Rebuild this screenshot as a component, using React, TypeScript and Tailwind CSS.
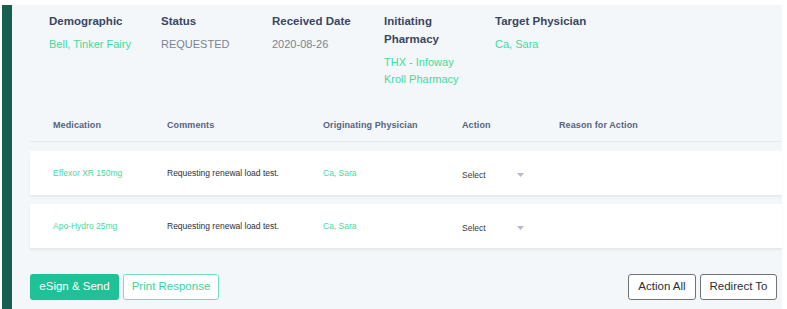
interface Field { label: string; values: string[]; tone: "green" | "gray"; }
interface Med { name: string; comment: string; physician: string; }

const FIELDS: Field[] = [
  { label: "Demographic", values: ["Bell, Tinker Fairy"], tone: "green" },
  { label: "Status", values: ["REQUESTED"], tone: "gray" },
  { label: "Received Date", values: ["2020-08-26"], tone: "gray" },
  { label: "Initiating Pharmacy", values: ["THX - Infoway", "Kroll Pharmacy"], tone: "green" },
  { label: "Target Physician", values: ["Ca, Sara"], tone: "green" },
];

const MEDS: Med[] = [
  { name: "Effexor XR 150mg", comment: "Requesting renewal load test.", physician: "Ca, Sara" },
  { name: "Apo-Hydro 25mg", comment: "Requesting renewal load test.", physician: "Ca, Sara" },
];

const COLS = "grid grid-cols-[114px_156px_139px_97px_1fr] pl-[23px]";

function Caret() {
  return (
    <svg width="7" height="4" viewBox="0 0 7 4" className="ml-[31px] mt-[-1px]">
      <path d="M0 0h7L3.5 4z" fill="#b4bac6" />
    </svg>
  );
}

export default function App() {
  return (
    <div className="flex h-[309px] w-full bg-white pl-[2px] pr-[5px] pt-[5px] font-['Liberation_Sans',Arial,sans-serif]">
      <div className="w-[10px] shrink-0 bg-[#17604f]" />
      <div className="flex flex-1 flex-col bg-[#f4f7fa]">
        {/* Summary */}
        <div className="grid grid-cols-[112px_111px_112px_111px_1fr] pl-[37px] pt-[7px]">
          {FIELDS.map(f => (
            <div key={f.label} className="pr-4">
              <div className="text-[11.5px] font-bold leading-[18px] text-[#39465f]">{f.label}</div>
              <div className="mt-[6px]">
                {f.values.map(v => (
                  <div
                    key={v}
                    className={`text-[11px] leading-[17px] ${f.tone === "green" ? "text-[#40dc9b]" : "text-[#7b8291]"}`}
                  >
                    {v}
                  </div>
                ))}
              </div>
            </div>
          ))}
        </div>

        {/* Medications */}
        <div className="ml-[18px] mt-[22px]">
          <div className={`${COLS} h-[32px] items-center border-b border-[#e6eaef] text-[9px] font-bold tracking-[0.1px] text-[#55637e]`}>
            <div>Medication</div>
            <div>Comments</div>
            <div>Originating Physician</div>
            <div>Action</div>
            <div>Reason for Action</div>
          </div>
          {MEDS.map(m => (
            <div
              key={m.name}
              className={`${COLS} mt-[9px] h-[44px] items-center bg-white text-[8.5px] shadow-[0_2px_2px_rgba(0,0,0,0.06)]`}
            >
              <div className="text-[#4ad9a0]">{m.name}</div>
              <div className="text-[#2b2f3a]">{m.comment}</div>
              <div className="text-[#4ad9a0]">{m.physician}</div>
              <div className="mt-[4px] flex items-center text-[#333a47]">
                Select
                <Caret />
              </div>
              <div />
            </div>
          ))}
        </div>

        {/* Footer actions */}
        <div className="ml-[18px] mr-[5px] mt-[26px] flex items-center gap-[4px] text-[11.5px]">
          <button className="h-[26px] w-[89px] rounded-[3px] bg-[#1fc297] text-white">eSign &amp; Send</button>
          <button className="h-[26px] w-[96px] rounded-[3px] border border-[#74dcc2] bg-white text-[#3fcf9f]">Print Response</button>
          <div className="flex-1" />
          <button className="h-[26px] w-[68px] rounded-[3px] border border-[#6f737a] bg-white text-[#2b2f36]">Action All</button>
          <button className="h-[26px] w-[77px] rounded-[3px] border border-[#6f737a] bg-white text-[#2b2f36]">Redirect To</button>
        </div>
      </div>
    </div>
  );
}
